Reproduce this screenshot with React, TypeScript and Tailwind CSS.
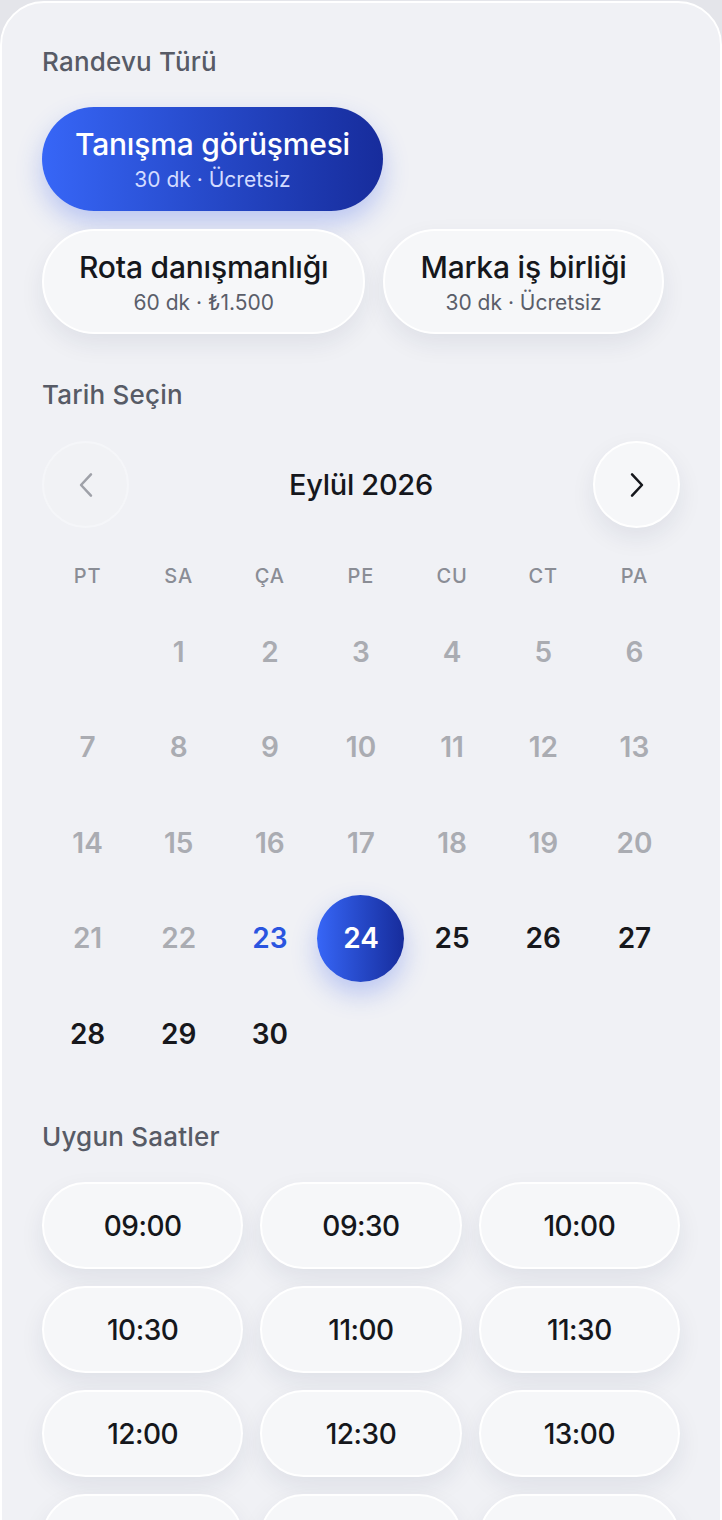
import React from 'react'

const font = { fontFamily: '"Inter", "Noto Sans", sans-serif' }

const types = [
    { title: 'Tanışma görüşmesi', sub: '30 dk · Ücretsiz', active: true },
    { title: 'Rota danışmanlığı', sub: '60 dk · ₺1.500', active: false },
    { title: 'Marka iş birliği', sub: '30 dk · Ücretsiz', active: false },
]

const weekdays = ['PT', 'SA', 'ÇA', 'PE', 'CU', 'CT', 'PA']

const times = ['09:00', '09:30', '10:00', '10:30', '11:00', '11:30', '12:00', '12:30', '13:00', '13:30', '14:00', '14:30']

// september 2026 starts on tuesday
const days: (number | null)[] = [null, ...Array.from({ length: 30 }, (_, i) => i + 1)]

function ChevronLeft({ className }: { className?: string }) {
    return (
        <svg className={className} width="34" height="34" viewBox="0 0 24 24" fill="none" stroke="currentColor" strokeWidth="1.8" strokeLinecap="round" strokeLinejoin="round">
            <path d="M15.5 4.5L8.5 12l7 7.5" />
        </svg>
    )
}

function ChevronRight({ className }: { className?: string }) {
    return (
        <svg className={className} width="34" height="34" viewBox="0 0 24 24" fill="none" stroke="currentColor" strokeWidth="1.8" strokeLinecap="round" strokeLinejoin="round">
            <path d="M8.5 4.5l7 7.5-7 7.5" />
        </svg>
    )
}

export default function App() {
    return (
        <div className="w-full min-h-[1520px] bg-[#e4e5ea] pt-[1px]" style={font}>
            <div className="min-h-[1540px] bg-[#f0f1f5] border-2 border-white rounded-t-[44px] px-[40px] pt-[43px] pb-10">

                {/* appointment type */}
                <h2 className="text-[26px] leading-[32px] font-medium text-[#575b66] tracking-[0.2px]">Randevu Türü</h2>
                <div className="mt-[29px] flex flex-wrap gap-[18px]">
                    {types.map((t) =>
                        t.active ? (
                            <button key={t.title} className="h-[104px] px-[33px] rounded-full bg-gradient-to-r from-[#3766f7] to-[#172c9c] shadow-[0_12px_26px_rgba(45,85,235,0.28)] flex flex-col items-center justify-center">
                                <span className="text-[30px] leading-[38px] font-medium text-white tracking-[-0.2px]">{t.title}</span>
                                <span className="mt-[4px] text-[21px] leading-[26px] text-[#d3dbff]">{t.sub}</span>
                            </button>
                        ) : (
                            <button key={t.title} className="h-[105px] px-[35px] rounded-full bg-[#f6f7f9] border-2 border-white shadow-[0_10px_24px_rgba(30,40,80,0.08)] flex flex-col items-center justify-center">
                                <span className="text-[30px] leading-[38px] font-medium text-[#15171c] tracking-[-0.2px]">{t.title}</span>
                                <span className="mt-[4px] text-[21px] leading-[26px] text-[#5a5e6a]">{t.sub}</span>
                            </button>
                        )
                    )}
                </div>

                {/* date */}
                <h2 className="mt-[45px] text-[26px] leading-[32px] font-medium text-[#575b66] tracking-[0.2px]">Tarih Seçin</h2>
                <div className="mt-[30px] flex items-center justify-between">
                    <button className="w-[87px] h-[87px] rounded-full bg-[#f2f3f6] border-2 border-[#f7f8fa] opacity-80 flex items-center justify-center">
                        <ChevronLeft className="text-[#8b8e96]" />
                    </button>
                    <span className="text-[29px] font-medium text-[#15171c] tracking-[-0.3px]">Eylül 2026</span>
                    <button className="w-[87px] h-[87px] rounded-full bg-[#f6f7f9] border-2 border-white shadow-[0_10px_24px_rgba(30,40,80,0.08)] flex items-center justify-center">
                        <ChevronRight className="text-[#15171c]" />
                    </button>
                </div>

                <div className="mt-[33px] grid grid-cols-7">
                    {weekdays.map((w) => (
                        <div key={w} className="h-[30px] flex items-center justify-center text-[20px] font-medium text-[#8a8d95] tracking-[1px]">{w}</div>
                    ))}
                </div>

                <div className="mt-[15px] grid grid-cols-7 gap-y-[4.6px]">
                    {days.map((d, i) => {
                        let cls = 'text-[#17181c]'
                        if (d !== null && d < 23) cls = 'text-[#aaacb2]'
                        if (d === 23) cls = 'text-[#2a55e0]'
                        return (
                            <div key={i} className="h-[91px] flex items-center justify-center">
                                {d === 24 ? (
                                    <div className="w-[87px] h-[87px] rounded-full bg-gradient-to-r from-[#3766f7] to-[#172c9c] shadow-[0_12px_26px_rgba(45,85,235,0.28)] flex items-center justify-center text-[28px] font-semibold text-white">
                                        24
                                    </div>
                                ) : (
                                    <span className={`text-[28px] font-semibold ${cls}`}>{d ?? ''}</span>
                                )}
                            </div>
                        )
                    })}
                </div>

                {/* times */}
                <h2 className="mt-[42px] text-[26px] leading-[32px] font-medium text-[#575b66] tracking-[0.2px]">Uygun Saatler</h2>
                <div className="mt-[29px] grid grid-cols-3 gap-[17px]">
                    {times.map((t) => (
                        <button key={t} className="h-[87px] rounded-full bg-[#f6f7f9] border-2 border-white shadow-[0_10px_24px_rgba(30,40,80,0.08)] flex items-center justify-center text-[28px] font-medium text-[#15171c] tracking-[-0.5px]">
                            {t}
                        </button>
                    ))}
                </div>
            </div>
        </div>
    )
}
